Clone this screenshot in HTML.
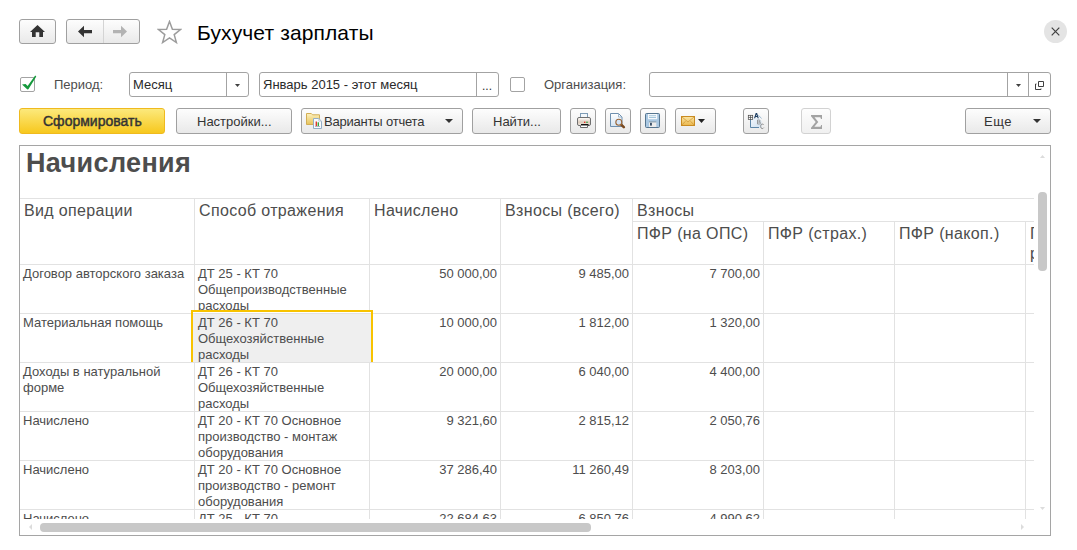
<!DOCTYPE html>
<html><head><meta charset="utf-8">
<style>
*{box-sizing:border-box;margin:0;padding:0}
html,body{width:1077px;height:550px;overflow:hidden;background:#fff;font-family:"Liberation Sans",sans-serif;color:#4d4d4d}
.a{position:absolute}
.btn{position:absolute;border:1px solid #a0a0a0;border-radius:3px;background:linear-gradient(#fdfdfd,#e9e9e9);}
.t13{font-size:13px;line-height:15px;white-space:nowrap}
.inp{position:absolute;border:1px solid #a3a3a3;border-radius:3px;background:#fff}
.vl{position:absolute;width:1px;background:#a3a3a3}
.gl{position:absolute;background:#e2e2e2}
.hd{position:absolute;font-size:16px;line-height:18px;letter-spacing:0.35px;white-space:nowrap;color:#4d4d4d}
.cell{position:absolute;font-size:13px;line-height:16px;color:#4d4d4d}
.num{position:absolute;font-size:13px;line-height:16px;color:#4d4d4d;text-align:right;white-space:nowrap}
</style></head><body>

<!-- top nav -->
<div class="btn" style="left:19px;top:19px;width:37px;height:25px"></div>
<svg class="a" style="left:30px;top:24px" width="16" height="14" viewBox="0 0 16 14"><path d="M7.5 1 L15 8 L13 8 L13 13 L9.3 13 L9.3 8.2 L5.7 8.2 L5.7 13 L2 13 L2 8 L0 8 Z" fill="#333"/></svg>

<div class="btn" style="left:66px;top:19px;width:74px;height:25px"></div>
<div class="a" style="left:103px;top:20px;width:1px;height:23px;background:#d4d4d4"></div>
<svg class="a" style="left:78px;top:25px" width="15" height="13" viewBox="0 0 15 13"><path d="M0 6.5 L6 0.8 L6 5 L14 5 L14 8.2 L6 8.2 L6 12.3 Z" fill="#333"/></svg>
<svg class="a" style="left:113px;top:25px" width="15" height="13" viewBox="0 0 15 13"><path d="M14 6.5 L8 0.8 L8 5 L0 5 L0 8.2 L8 8.2 L8 12.3 Z" fill="#b3b3b3"/></svg>

<svg class="a" style="left:157px;top:20px" width="25" height="25" viewBox="0 0 25 25"><path d="M12.5 1.5 L15.4 9.3 L23.5 9.5 L17.2 14.6 L19.4 22.6 L12.5 18 L5.6 22.6 L7.8 14.6 L1.5 9.5 L9.6 9.3 Z" fill="none" stroke="#9c9c9c" stroke-width="1.5" stroke-linejoin="miter"/></svg>

<div class="a" style="left:197px;top:21px;font-size:21px;line-height:24px;color:#000;white-space:nowrap;letter-spacing:0.12px">Бухучет зарплаты</div>

<div class="a" style="left:1044px;top:20px;width:23px;height:23px;border-radius:50%;background:#e4e4e4"></div>
<svg class="a" style="left:1051px;top:27px" width="9" height="9" viewBox="0 0 9 9"><path d="M0.7 0.7 L8.3 8.3 M8.3 0.7 L0.7 8.3" stroke="#404040" stroke-width="1.2"/></svg>

<!-- row 1 -->
<div class="a" style="left:20px;top:77px;width:15px;height:15px;border:1px solid #a3a3a3;border-radius:2px;background:#fff"></div>
<svg class="a" style="left:21px;top:75px" width="16" height="16" viewBox="0 0 16 16"><path d="M1 9.6 L4.6 9 L6.6 10.9 L14.2 0.6 L15.3 1.5 L7.4 14.3 L6.4 14.6 Z" fill="#15993c"/></svg>
<div class="a t13" style="left:54px;top:77px">Период:</div>

<div class="inp" style="left:129px;top:72px;width:120px;height:25px"></div>
<div class="vl" style="left:226px;top:73px;height:23px"></div>
<div class="a t13" style="left:133px;top:77px;color:#2a2a2a">Месяц</div>
<svg class="a" style="left:235px;top:84px" width="5" height="3" viewBox="0 0 5 3"><path d="M0 0 L5 0 L2.5 3 Z" fill="#404040"/></svg>

<div class="inp" style="left:259px;top:72px;width:240px;height:25px"></div>
<div class="vl" style="left:476px;top:73px;height:23px"></div>
<div class="a t13" style="left:263px;top:77px;color:#2a2a2a">Январь 2015 - этот месяц</div>
<div class="a t13" style="left:482px;top:79px;color:#333;font-size:12px">...</div>

<div class="a" style="left:510px;top:77px;width:15px;height:15px;border:1px solid #a3a3a3;border-radius:2px;background:#fff"></div>
<div class="a t13" style="left:544px;top:77px">Организация:</div>

<div class="inp" style="left:649px;top:72px;width:402px;height:25px"></div>
<div class="vl" style="left:1007px;top:73px;height:23px"></div>
<div class="vl" style="left:1028px;top:73px;height:23px"></div>
<svg class="a" style="left:1016px;top:84px" width="5" height="3" viewBox="0 0 5 3"><path d="M0 0 L5 0 L2.5 3 Z" fill="#404040"/></svg>
<svg class="a" style="left:1034px;top:80px" width="11" height="11" viewBox="0 0 11 11"><path d="M4.5 1.5 H9.5 V6.5 H4.5 Z M2.5 4 H1.5 V9.5 H7 V8.5" fill="none" stroke="#404040" stroke-width="1"/></svg>

<!-- row 2 -->
<div class="a" style="left:19px;top:108px;width:146px;height:26px;border:1px solid #efba1e;border-radius:3px;background:linear-gradient(#fce97c,#f7c81e)"></div>
<div class="a" style="left:43px;top:113px;font-size:14px;line-height:16px;white-space:nowrap;color:#333;-webkit-text-stroke:0.45px #333">Сформировать</div>

<div class="btn" style="left:176px;top:108px;width:116px;height:26px"></div>
<div class="a t13" style="left:197px;top:114px;color:#333">Настройки...</div>

<div class="btn" style="left:301px;top:108px;width:162px;height:26px"></div>
<svg class="a" style="left:305px;top:111px" width="18" height="19" viewBox="0 0 18 19">
<linearGradient id="fy" x1="0" y1="0" x2="0" y2="1"><stop offset="0" stop-color="#fdf1bf"/><stop offset="1" stop-color="#e6c35a"/></linearGradient>
<path d="M1.5 2.5 H6.3 L7.5 3.8 H14.5 V13.5 H1.5 Z" fill="url(#fy)" stroke="#d2ae55"/>
<path d="M8.5 7.5 H13.8 L16.5 10.2 V17.5 H8.5 Z" fill="#f7fafd" stroke="#93aec6"/>
<path d="M13.8 7.5 V10.2 H16.5" fill="none" stroke="#b5c8d8" stroke-width="0.8"/>
<rect x="10.6" y="10.5" width="1.4" height="4.5" fill="#e2382c"/><rect x="12.6" y="11.3" width="1.4" height="3.7" fill="#35a640"/>
<rect x="10" y="15" width="5" height="0.8" fill="#9aa8b5"/>
</svg>
<div class="a t13" style="left:324px;top:114px;color:#333;letter-spacing:-0.2px">Варианты отчета</div>
<svg class="a" style="left:445px;top:119px" width="8" height="4" viewBox="0 0 8 4"><path d="M0 0 L8 0 L4 4 Z" fill="#333"/></svg>

<div class="btn" style="left:472px;top:108px;width:89px;height:26px"></div>
<div class="a t13" style="left:493px;top:114px;color:#333">Найти...</div>

<div class="btn" style="left:570px;top:108px;width:26px;height:26px"></div>
<svg class="a" style="left:576px;top:112px" width="17" height="17" viewBox="0 0 17 17">
<defs><linearGradient id="pb" x1="0" y1="0" x2="0" y2="1"><stop offset="0" stop-color="#ffffff"/><stop offset="0.6" stop-color="#dccbbb"/><stop offset="1" stop-color="#f6f1ec"/></linearGradient>
<linearGradient id="dg" x1="0" y1="0" x2="0" y2="1"><stop offset="0" stop-color="#ffffff"/><stop offset="1" stop-color="#d3e3f2"/></linearGradient>
<linearGradient id="fl" x1="0" y1="0" x2="0" y2="1"><stop offset="0" stop-color="#fbeaa7"/><stop offset="1" stop-color="#e9c25c"/></linearGradient>
<linearGradient id="ev" x1="0" y1="0" x2="0" y2="1"><stop offset="0" stop-color="#fbe6a4"/><stop offset="1" stop-color="#eab64c"/></linearGradient></defs>
<rect x="4.5" y="1.5" width="7" height="6" fill="#f2f7fb" stroke="#7e9cb6"/>
<rect x="1.5" y="5.5" width="13" height="8" rx="1.5" fill="url(#pb)" stroke="#6f6f6f"/>
<rect x="8" y="9.6" width="1.4" height="1.4" fill="#e3342a"/><rect x="10.3" y="9.6" width="1.4" height="1.4" fill="#2aa23a"/>
<rect x="5" y="12" width="7.5" height="1.8" fill="#111"/>
<path d="M4.5 13.5 V15.5 H11.5 V13.5" fill="#fff" stroke="#6a6a6a"/>
</svg>
<div class="btn" style="left:605px;top:108px;width:26px;height:26px"></div>
<svg class="a" style="left:607px;top:110px" width="22" height="22" viewBox="0 0 22 22">
<path d="M3.5 3.5 H11.5 L15 7 V16.5 H3.5 Z" fill="url(#dg)" stroke="#6e8fae"/>
<path d="M11.5 3.5 V7 H15" fill="none" stroke="#8eaac4" stroke-width="0.8"/>
<path d="M14.2 14.6 L16.8 17.1" stroke="#7a4a20" stroke-width="2.6" stroke-linecap="round"/>
<circle cx="11.8" cy="12.2" r="3" fill="#d3e4f7" stroke="#9a6535" stroke-width="1.1"/>
</svg>
<div class="btn" style="left:640px;top:108px;width:26px;height:26px"></div>
<svg class="a" style="left:642px;top:110px" width="22" height="22" viewBox="0 0 22 22">
<rect x="3.5" y="3.5" width="14" height="14" rx="1" fill="#aac8e2" stroke="#56758f"/>
<rect x="6" y="4" width="9.2" height="5.2" fill="#f6f9fc"/>
<rect x="7" y="5.3" width="7" height="0.9" fill="#9cc0d8"/><rect x="7" y="7.1" width="7" height="0.9" fill="#9cc0d8"/>
<rect x="7" y="11.5" width="7.3" height="5.5" fill="#ececec"/>
<rect x="7" y="11.5" width="7.3" height="0.8" fill="#5f7f98"/>
<rect x="8" y="12.8" width="1.9" height="2.8" fill="#3a5068"/>
</svg>
<div class="btn" style="left:675px;top:108px;width:41px;height:26px"></div>
<svg class="a" style="left:676px;top:108px" width="36" height="26" viewBox="0 0 36 26">
<rect x="5.5" y="8.5" width="13" height="9" fill="url(#ev)" stroke="#c98b22"/>
<path d="M6 9 L12 14 L18 9 M6 17 L9.5 13.2 M18 17 L14.5 13.2" fill="none" stroke="#d39a38" stroke-width="0.8"/>
<path d="M22 11 L29 11 L25.5 15 Z" fill="#222"/>
</svg>
<div class="btn" style="left:743px;top:108px;width:26px;height:26px"></div>
<svg class="a" style="left:746px;top:111px" width="20" height="20" viewBox="0 0 20 20">
<linearGradient id="pg" x1="0" y1="0" x2="1" y2="1"><stop offset="0" stop-color="#f4f8fc"/><stop offset="1" stop-color="#cfe0f0"/></linearGradient>
<path d="M4 7 H12.5 L15.5 10 V16.5 H4 Z" fill="url(#pg)"/>
<path d="M4.5 7.5 V16.5 H13" fill="none" stroke="#5d86a8" stroke-width="1"/>
<path d="M12.3 4.2 L15.6 7.4" stroke="#8fb0cc" stroke-width="0.9"/>
<rect x="2.3" y="4.3" width="4.4" height="4.2" fill="#fff" stroke="#444" stroke-width="0.7"/>
<path d="M4.5 4.3 V8.5 M2.3 6.4 H6.7" stroke="#444" stroke-width="0.7"/>
<path d="M8 7.2 L9.7 2 H11.1 L12.8 7.2 H11.6 L11.2 6 H9.6 L9.2 7.2 Z M9.9 5 H10.9 L10.4 3.4 Z" fill="#1f3f63"/>
<path d="M11.5 9 V13 H13.3 Q14.5 13 14.5 12 Q14.5 11 13.3 11 H11.5 M11.5 9 H13 Q14.1 9 14.1 10 Q14.1 11 13 11" fill="none" stroke="#8a8a8a" stroke-width="0.8"/>
<path d="M17.8 14 Q17.2 13 16.2 13 Q14.6 13 14.6 15.3 Q14.6 17.6 16.2 17.6 Q17.2 17.6 17.8 16.6" fill="none" stroke="#8a8a8a" stroke-width="0.9"/>
</svg>

<div class="a" style="left:801px;top:108px;width:30px;height:26px;border:1px solid #d2d2d2;border-radius:3px;background:linear-gradient(#fdfdfd,#f0f0f0)"></div>
<svg class="a" style="left:811px;top:115px" width="12" height="14" viewBox="0 0 12 14"><path d="M0 0 L11 0 L11 4 L10 4 L9.3 2.2 L3.5 2.2 L7.3 7 L3.3 11.8 L9.5 11.8 L10.2 10 L11 10 L11 14 L0 14 L0 12.8 L4.7 7 L0 1.3 Z" fill="#a3a3a3"/></svg>

<div class="btn" style="left:965px;top:108px;width:86px;height:26px"></div>
<div class="a t13" style="left:984px;top:114px;color:#333;letter-spacing:0.5px">Еще</div>
<svg class="a" style="left:1033px;top:119px" width="8" height="4" viewBox="0 0 8 4"><path d="M0 0 L8 0 L4 4 Z" fill="#333"/></svg>

<!-- report frame -->
<div class="a" style="left:19px;top:145px;width:1032px;height:391px;border:1px solid #a5a5a5;background:#fff"></div>
<!-- scrollbars -->
<div class="a" style="left:1038px;top:192px;width:9px;height:79px;border-radius:4px;background:#c8c8c8"></div>
<svg class="a" style="left:1040px;top:155px" width="5" height="3" viewBox="0 0 5 3"><path d="M0 3 L5 3 L2.5 0 Z" fill="#dcdcdc"/></svg>
<svg class="a" style="left:1040px;top:507px" width="5" height="3" viewBox="0 0 5 3"><path d="M0 0 L5 0 L2.5 3 Z" fill="#dcdcdc"/></svg>
<div class="a" style="left:40px;top:523px;width:551px;height:9px;border-radius:4px;background:#c8c8c8"></div>
<svg class="a" style="left:29px;top:524px" width="3" height="6" viewBox="0 0 3 6"><path d="M3 0 L3 6 L0 3 Z" fill="#dcdcdc"/></svg>
<svg class="a" style="left:1021px;top:524px" width="3" height="6" viewBox="0 0 3 6"><path d="M0 0 L0 6 L3 3 Z" fill="#dcdcdc"/></svg>
<div id="tbl" class="a" style="left:20px;top:146px;width:1014px;height:373px;overflow:hidden">
<div class="a" style="left:6px;top:0px;font-size:27px;line-height:34px;font-weight:bold;color:#4d4d4d;white-space:nowrap;letter-spacing:0.35px">Начисления</div>
<div class="gl" style="left:0px;top:52px;width:1014px;height:1px;background:#e2e2e2"></div>
<div class="gl" style="left:612px;top:75px;width:402px;height:1px;background:#e2e2e2"></div>
<div class="gl" style="left:0px;top:118px;width:1014px;height:1px;background:#e2e2e2"></div>
<div class="gl" style="left:0px;top:167px;width:1014px;height:1px;background:#e2e2e2"></div>
<div class="gl" style="left:0px;top:216px;width:1014px;height:1px;background:#e2e2e2"></div>
<div class="gl" style="left:0px;top:265px;width:1014px;height:1px;background:#e2e2e2"></div>
<div class="gl" style="left:0px;top:314px;width:1014px;height:1px;background:#e2e2e2"></div>
<div class="gl" style="left:0px;top:363px;width:1014px;height:1px;background:#e2e2e2"></div>
<div class="gl" style="left:0px;top:412px;width:1014px;height:1px;background:#e2e2e2"></div>
<div class="gl" style="left:174px;top:52px;width:1px;height:362px;background:#e2e2e2"></div>
<div class="gl" style="left:349px;top:52px;width:1px;height:362px;background:#e2e2e2"></div>
<div class="gl" style="left:480px;top:52px;width:1px;height:362px;background:#e2e2e2"></div>
<div class="gl" style="left:612px;top:52px;width:1px;height:362px;background:#e2e2e2"></div>
<div class="gl" style="left:743px;top:75px;width:1px;height:339px;background:#e2e2e2"></div>
<div class="gl" style="left:874px;top:75px;width:1px;height:339px;background:#e2e2e2"></div>
<div class="gl" style="left:1005px;top:75px;width:1px;height:339px;background:#e2e2e2"></div>
<div class="hd" style="left:4px;top:56px">Вид операции</div>
<div class="hd" style="left:179px;top:56px">Способ отражения</div>
<div class="hd" style="left:354px;top:56px">Начислено</div>
<div class="hd" style="left:485px;top:56px">Взносы (всего)</div>
<div class="hd" style="left:617px;top:56px">Взносы</div>
<div class="hd" style="left:617px;top:79px">ПФР (на ОПС)</div>
<div class="hd" style="left:748px;top:79px">ПФР (страх.)</div>
<div class="hd" style="left:879px;top:79px">ПФР (накоп.)</div>
<div class="hd" style="left:1010px;top:79px;line-height:20px;margin-top:-1px">ПФР (ФСС)<br>размер</div>
<div class="cell" style="left:3px;top:120px">Договор авторского заказа</div>
<div class="cell" style="left:178px;top:120px">ДТ 25 - КТ 70<br>Общепроизводственные<br>расходы</div>
<div class="num" style="right:537px;top:120px">50 000,00</div>
<div class="num" style="right:405px;top:120px">9 485,00</div>
<div class="num" style="right:274px;top:120px">7 700,00</div>
<div class="a" style="left:171px;top:164px;width:182px;height:52px;border:2px solid #f8c300;border-bottom:none;background:linear-gradient(#fff 0 1px,#e2e2e2 1px 2px,#efefef 2px)"></div>
<div class="cell" style="left:3px;top:169px">Материальная помощь</div>
<div class="cell" style="left:178px;top:169px">ДТ 26 - КТ 70<br>Общехозяйственные<br>расходы</div>
<div class="num" style="right:537px;top:169px">10 000,00</div>
<div class="num" style="right:405px;top:169px">1 812,00</div>
<div class="num" style="right:274px;top:169px">1 320,00</div>
<div class="cell" style="left:3px;top:218px">Доходы в натуральной<br>форме</div>
<div class="cell" style="left:178px;top:218px">ДТ 26 - КТ 70<br>Общехозяйственные<br>расходы</div>
<div class="num" style="right:537px;top:218px">20 000,00</div>
<div class="num" style="right:405px;top:218px">6 040,00</div>
<div class="num" style="right:274px;top:218px">4 400,00</div>
<div class="cell" style="left:3px;top:267px">Начислено</div>
<div class="cell" style="left:178px;top:267px">ДТ 20 - КТ 70 Основное<br>производство - монтаж<br>оборудования</div>
<div class="num" style="right:537px;top:267px">9 321,60</div>
<div class="num" style="right:405px;top:267px">2 815,12</div>
<div class="num" style="right:274px;top:267px">2 050,76</div>
<div class="cell" style="left:3px;top:316px">Начислено</div>
<div class="cell" style="left:178px;top:316px">ДТ 20 - КТ 70 Основное<br>производство - ремонт<br>оборудования</div>
<div class="num" style="right:537px;top:316px">37 286,40</div>
<div class="num" style="right:405px;top:316px">11 260,49</div>
<div class="num" style="right:274px;top:316px">8 203,00</div>
<div class="cell" style="left:3px;top:365px">Начислено</div>
<div class="cell" style="left:178px;top:365px">ДТ 25 - КТ 70<br>Общепроизводственные<br>расходы</div>
<div class="num" style="right:537px;top:365px">22 684,63</div>
<div class="num" style="right:405px;top:365px">6 850,76</div>
<div class="num" style="right:274px;top:365px">4 990,62</div>
</div>

</body></html>
